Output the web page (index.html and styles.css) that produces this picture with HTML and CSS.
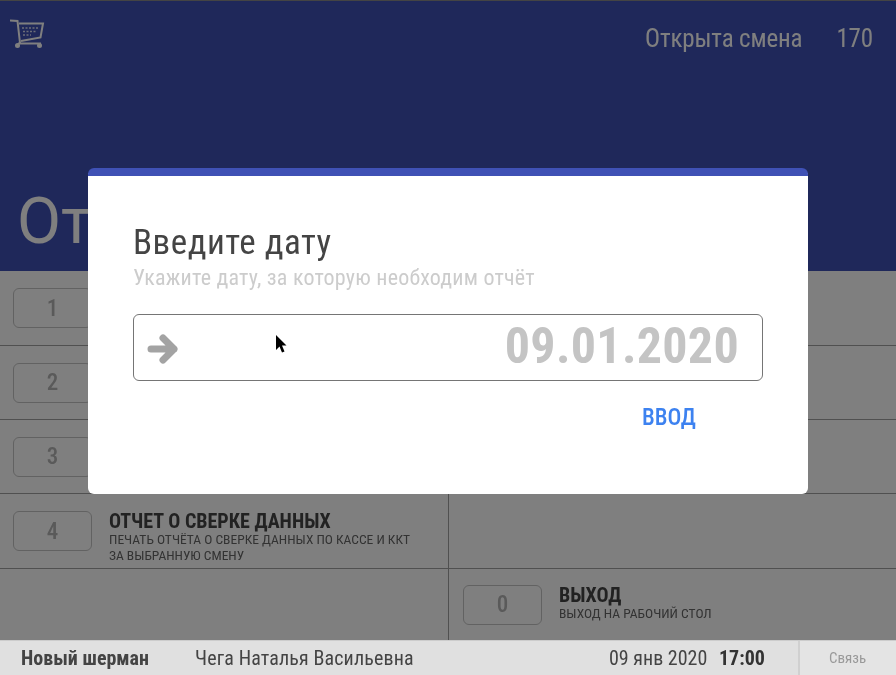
FILE: index.html
```html
<!DOCTYPE html>
<html lang="ru">
<head>
<meta charset="utf-8">
<title>Отчеты</title>
<link rel="stylesheet" href="styles.css">
</head>
<body>
<div class="app">
  <div class="main">
    <header class="header">
      <div class="topbar">
        <svg class="cart" viewBox="0 0 36 30" width="36" height="30" fill="none" stroke="#fff" stroke-width="2">
          <path d="M0 1.500L7.500 2L10 24"/>
          <path d="M9 4.500H33L30.500 18.500L11 22"/>
          <path d="M8 24.500H31"/>
          <circle cx="7.500" cy="26.500" r="2.500" fill="#fff" stroke="none"/>
          <circle cx="29.500" cy="26.500" r="2.500" fill="#fff" stroke="none"/>
          <path class="cart-grid" d="M12 9h17M13 12.500h14M13 16h8" stroke-width="1.500" stroke-dasharray="2 1.500"/>
        </svg>
        <div class="shift"><span>Открыта смена</span><span class="shift-no">170</span></div>
      </div>
      <h1 class="page-title">От</h1>
    </header>
    <section class="menu">
      <div class="item"><div class="key">1</div></div>
      <div class="item"></div>
      <div class="item"><div class="key">2</div></div>
      <div class="item"></div>
      <div class="item"><div class="key">3</div></div>
      <div class="item"></div>
      <div class="item">
        <div class="key">4</div>
        <div class="label label-long">
          <div class="label-title">ОТЧЕТ О СВЕРКЕ ДАННЫХ</div>
          <div class="label-sub">ПЕЧАТЬ ОТЧЁТА О СВЕРКЕ ДАННЫХ ПО КАССЕ И ККТ<br>ЗА ВЫБРАННУЮ СМЕНУ</div>
        </div>
      </div>
      <div class="item"></div>
      <div class="item item-last"></div>
      <div class="item item-last">
        <div class="key">0</div>
        <div class="label label-short">
          <div class="label-title">ВЫХОД</div>
          <div class="label-sub">ВЫХОД НА РАБОЧИЙ СТОЛ</div>
        </div>
      </div>
    </section>
    <div class="overlay"></div>
    <div class="dialog">
      <h2 class="dialog-title">Введите дату</h2>
      <p class="dialog-sub">Укажите дату, за которую необходим отчёт</p>
      <div class="field">
        <svg class="arrow" viewBox="0 0 32 32" width="32" height="32" fill="none" stroke="#a3a3a3" stroke-width="7" stroke-linecap="round" stroke-linejoin="round">
          <path d="M4 16H27M16 5L27 16L16 27"/>
        </svg>
        <span class="date">09.01.2020</span>
      </div>
      <div class="actions"><span class="enter">ВВОД</span></div>
      <svg class="pointer" viewBox="0 0 12 20" width="12" height="20"><path d="M1 0v15l3.500-3.500 2.500 6 2.500-1-2.500-6h4.500z" fill="#000"/></svg>
    </div>
  </div>
  <footer class="status">
    <b class="store">Новый шерман</b>
    <span class="cashier">Чега Наталья Васильевна</span>
    <span class="date-now">09 янв 2020</span>
    <b class="time">17:00</b>
    <span class="link">Связь</span>
  </footer>
</div>
</body>
</html>
```
FILE: styles.css
```css
* { box-sizing: border-box; }
html, body { margin: 0; padding: 0; }
body { width: 896px; height: 675px; overflow: hidden; font-family: "Roboto Condensed", Roboto, "Liberation Sans", sans-serif; background: #fff; }
.app { width: 896px; height: 675px; display: flex; flex-direction: column; filter: blur(.45px); }
.main { position: relative; height: 640px; }

.header { height: 271px; background: #3f51b5; border-top: 1px solid #888; color: #fff; display: flex; flex-direction: column; justify-content: space-between; }
.topbar { display: flex; justify-content: space-between; padding: 18px 23px 0 10px; }
.shift { display: flex; gap: 34px; font-size: 25px; line-height: 40px; letter-spacing: -0.15px; }
.cart-grid { opacity: .8; }
.page-title { margin: 0; padding: 0 0 14px 17px; font-family: Roboto, sans-serif; font-size: 64px; line-height: 70px; font-weight: 400; }

.menu { display: grid; grid-template-columns: 449px 447px; grid-template-rows: 75px 74px 74px 75px 71px; height: 369px; background: #fff; }
.item { display: flex; align-items: center; padding-left: 14px; gap: 17px; border-bottom: 1px solid #a0a0a0; }
.item:nth-child(odd) { padding-left: 13px; border-right: 1px solid #a0a0a0; }
.item-last { border-bottom: 0; }
.key { flex: none; width: 79px; height: 40px; border: 1px solid #c4c4c4; border-radius: 6px; display: flex; align-items: center; justify-content: center; font-size: 23px; font-weight: 500; color: #b4b4b4; }
.label-long { margin-top: 12px; }
.label-short { margin-bottom: 4px; }
.label-title { font-size: 20px; line-height: 20px; font-weight: 700; color: #444; }
.label-sub { font-size: 13.500px; line-height: 16px; color: #666; }

.overlay { position: absolute; inset: 0; background: rgba(0, 0, 0, .5); }
.dialog { position: absolute; left: 88px; top: 168px; width: 720px; height: 326px; background: #fff; border-top: 8px solid #3f51b5; border-radius: 6px; padding: 47px 45px 0 45px; }
.dialog-title { margin: 0; font-size: 35px; line-height: 40px; font-weight: 400; color: #444; letter-spacing: .5px; }
.dialog-sub { margin: 0; padding-top: 1px; font-size: 22px; line-height: 28px; color: #ccc; letter-spacing: .22px; }
.field { margin-top: 22px; height: 67px; border: 1px solid #757575; border-radius: 6px; display: flex; align-items: center; justify-content: space-between; padding: 0 23px 0 13px; }
.arrow { margin-top: 2px; }
.date { font-size: 50px; font-weight: 700; color: #c4c4c4; letter-spacing: .3px; margin-top: -3px; }
.actions { display: flex; justify-content: flex-end; padding: 23px 67px 0 0; }
.enter { font-size: 23px; line-height: 28px; font-weight: 500; color: #3d82f0; }
.pointer { position: absolute; left: 187px; top: 159px; }

.status { height: 35px; padding-bottom: 1px; background: #e0e0e0; border-top: 1px solid #ccc; display: flex; align-items: center; font-size: 20px; color: #444; white-space: nowrap; }
.store { margin-left: 21px; width: 174px; font-weight: 700; }
.cashier { width: 414px; letter-spacing: .13px; }
.date-now { width: 110px; }
.time { width: 79px; font-weight: 700; color: #333; }
.link { flex: 1; align-self: stretch; margin-bottom: -1px; display: flex; align-items: center; padding-left: 29px; border-left: 2px solid #d0d0d0; font-size: 15px; color: #999; background: #e4e4e4; }
```
